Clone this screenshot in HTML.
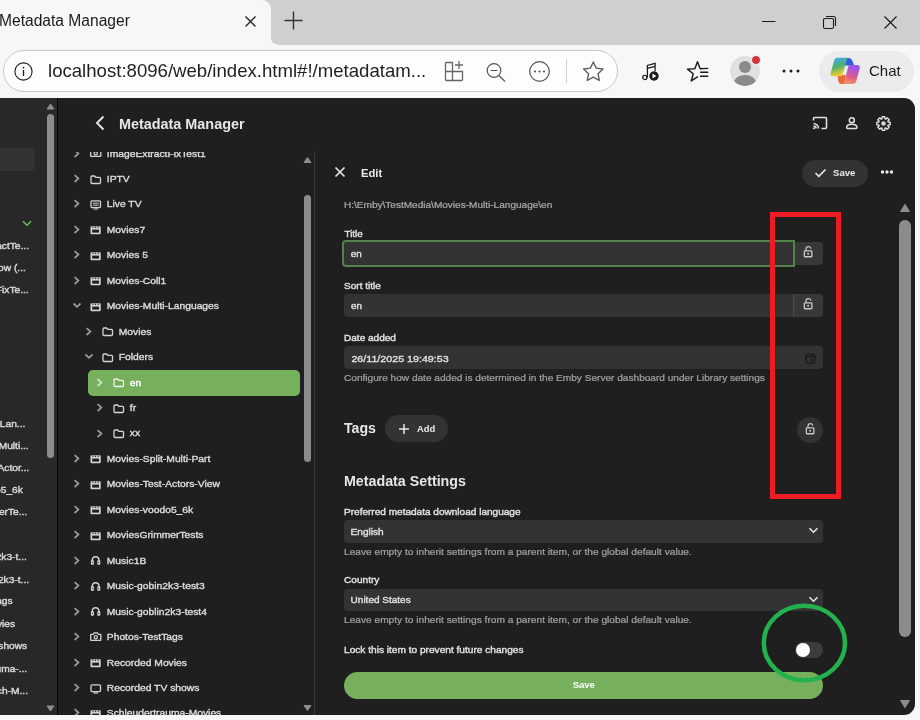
<!DOCTYPE html>
<html><head><meta charset="utf-8"><title>Metadata Manager</title>
<style>
html,body{margin:0;padding:0;}
body{width:920px;height:720px;overflow:hidden;position:relative;background:#f7f7f7;font-family:"Liberation Sans",sans-serif;}
.r{position:absolute;display:block;}
.t{position:absolute;white-space:nowrap;line-height:1;}
svg.r{overflow:visible;}
</style></head><body>
<div id="w" style="position:absolute;left:0;top:0;width:920px;height:720px;will-change:transform;"><div class="r" style="left:0px;top:0px;width:920px;height:98px;background:#f7f7f7;"></div>
<div class="r" style="left:270px;top:0px;width:650px;height:45px;background:#cfcfcf;border-bottom-left-radius:9px;"></div>
<div class="r" style="left:260px;top:0px;width:10px;height:45px;background:#f7f7f7;"></div>
<div class="r" style="left:262px;top:0;width:9px;height:9px;background:#cfcfcf;"></div>
<div class="r" style="left:261px;top:0;width:10px;height:45px;background:#f7f7f7;border-top-right-radius:9px;"></div>
<div class="t" style="left:-1px;top:13.00px;font-size:15.6px;color:#1b1b1b;font-weight:normal;">Metadata Manager</div>
<svg class="r" style="left:244px;top:15px;" width="13" height="13" viewBox="0 0 13 13"><path d="M1.5 1.5L11.5 11.5M11.5 1.5L1.5 11.5" stroke="#1b1b1b" stroke-width="1.3"/></svg>
<svg class="r" style="left:284px;top:11px;" width="19" height="19" viewBox="0 0 19 19"><path d="M9.5 0.5V18.5M0.5 9.5H18.5" stroke="#333" stroke-width="1.4"/></svg>
<svg class="r" style="left:762px;top:20px;" width="14" height="3" viewBox="0 0 14 3"><path d="M0 1.5H13.5" stroke="#1b1b1b" stroke-width="1"/></svg>
<svg class="r" style="left:822px;top:15px;" width="15" height="15" viewBox="0 0 15 15"><rect x="1.5" y="3.5" width="10" height="10" rx="1.5" fill="none" stroke="#1b1b1b" stroke-width="1.1"/><path d="M4 1.5H11.5A2 2 0 0 1 13.5 3.5V11" fill="none" stroke="#1b1b1b" stroke-width="1.1"/></svg>
<svg class="r" style="left:883px;top:15px;" width="15" height="15" viewBox="0 0 15 15"><path d="M1.5 1.5L13.5 13.5M13.5 1.5L1.5 13.5" stroke="#1b1b1b" stroke-width="1.2"/></svg>
<div class="r" style="left:3px;top:50px;width:613px;height:40px;background:#fdfdfd;border:1px solid #c8c8c8;border-radius:21px;"></div>
<svg class="r" style="left:13px;top:61px;" width="21" height="21" viewBox="0 0 21 21"><circle cx="10.5" cy="10.5" r="8.6" fill="none" stroke="#1b1b1b" stroke-width="1.1"/><path d="M10.5 9V15" stroke="#1b1b1b" stroke-width="1.3"/><circle cx="10.5" cy="6.6" r="0.9" fill="#1b1b1b"/></svg>
<div class="t" style="left:48px;top:62.00px;font-size:18.6px;color:#1f1f1f;font-weight:normal;">localhost:8096/web/index.html#!/metadatam...</div>
<svg class="r" style="left:440px;top:58px;" width="26" height="26" viewBox="0 0 26 26"><g fill="none" stroke="#666" stroke-width="1.3"><path d="M6.5 4.5H12.5V22.5H6.5Q5.5 22.5 5.5 21.5V5.5Q5.5 4.5 6.5 4.5Z"/><path d="M5.5 13.5H22.5V21.5Q22.5 22.5 21.5 22.5H12.5"/><path d="M19 3V11M15 7H23"/></g></svg>
<svg class="r" style="left:485px;top:61px;" width="22" height="22" viewBox="0 0 22 22"><g fill="none" stroke="#555" stroke-width="1.2"><circle cx="9" cy="9.5" r="6.8"/><path d="M5.5 9.5H12.5M14 14.5L20 20.5"/></g></svg>
<svg class="r" style="left:528px;top:60px;" width="23" height="23" viewBox="0 0 23 23"><circle cx="11.5" cy="11.5" r="9.8" fill="none" stroke="#555" stroke-width="1.2"/><circle cx="7" cy="11.5" r="1.1" fill="#555"/><circle cx="11.5" cy="11.5" r="1.1" fill="#555"/><circle cx="16" cy="11.5" r="1.1" fill="#555"/></svg>
<div class="r" style="left:566px;top:59px;width:1px;height:24px;background:#d0d0d0;"></div>
<svg class="r" style="left:582px;top:60px;" width="23" height="23" viewBox="0 0 23 23"><polygon points="11.30,2.00 14.24,8.15 21.00,9.05 16.06,13.75 17.30,20.45 11.30,17.20 5.30,20.45 6.54,13.75 1.60,9.05 8.36,8.15" fill="none" stroke="#606060" stroke-width="1.4" stroke-linejoin="round"/></svg>
<svg class="r" style="left:640px;top:60px;" width="22" height="24" viewBox="0 0 22 24"><g fill="none" stroke="#1b1b1b" stroke-width="1.25"><path d="M7.4 17.5V5.4L15.1 3.4V11"/><path d="M7.4 8.4L15.1 6.3"/><circle cx="4.8" cy="17.4" r="2.1"/></g><circle cx="14" cy="16" r="4.7" fill="#1b1b1b"/><path d="M12.5 13.6V18.4L16.4 16Z" fill="#fff"/></svg>
<svg class="r" style="left:684px;top:60px;" width="26" height="24" viewBox="0 0 26 24"><path d="M13.50 16.90 L7.27 20.98 L9.22 13.79 L3.42 9.12 L10.85 8.76 L13.50 1.80 L16.15 8.76 L23.7 8.4" fill="none" stroke="#1b1b1b" stroke-width="1.45" stroke-linejoin="round" stroke-linecap="round"/><path d="M16.6 12.3H23.7M16.6 16.2H23.7" stroke="#1b1b1b" stroke-width="1.45" stroke-linecap="round"/></svg>
<div class="r" style="left:730px;top:56px;width:30px;height:30px;border-radius:50%;background:#e0e0e0;overflow:hidden;"><div class="r" style="left:9px;top:5px;width:12px;height:12px;border-radius:50%;background:#8a8a8a;"></div><div class="r" style="left:4px;top:19px;width:22px;height:16px;border-radius:50%;background:#8a8a8a;"></div></div>
<div class="r" style="left:751px;top:55px;width:10px;height:10px;border-radius:50%;background:#d13438;border:1px solid #f7f7f7;box-sizing:border-box;"></div>
<svg class="r" style="left:781px;top:66px;" width="20" height="10" viewBox="0 0 20 10"><circle cx="3" cy="5" r="1.5" fill="#1b1b1b"/><circle cx="10" cy="5" r="1.5" fill="#1b1b1b"/><circle cx="17" cy="5" r="1.5" fill="#1b1b1b"/></svg>
<div class="r" style="left:819px;top:51px;width:95px;height:41px;background:#ebebeb;border-radius:21px;"></div>
<svg class="r" style="left:826px;top:54px;" width="38" height="34" viewBox="0 0 38 34"><defs><linearGradient id="g1" x1="0" y1="0" x2="0.25" y2="1"><stop offset="0" stop-color="#41a5f5"/><stop offset="0.55" stop-color="#52b36c"/><stop offset="1" stop-color="#f2cb2e"/></linearGradient><linearGradient id="g2" x1="0" y1="0" x2="-0.2" y2="1"><stop offset="0" stop-color="#9a58ea"/><stop offset="0.5" stop-color="#e2598e"/><stop offset="1" stop-color="#f3a35c"/></linearGradient></defs>
<path d="M18 4H22.5Q25.5 4 26.8 8L28.3 11.5H19Z" fill="#2f5fdc"/>
<path d="M11.5 21H19.5L18.8 30H15.5Q13 30 12.2 26.5Z" fill="#e86a3a"/>
<path d="M11.5 3.8H21.5L15.8 22.2H7Q4 22.2 4.7 19L8 7Q8.8 3.8 11.5 3.8Z" fill="url(#g1)"/>
<path d="M22.7 11H31.2Q34.5 11 33.7 14.5L30.5 26.5Q29.6 30 26.5 30H17.8Z" fill="url(#g2)"/></svg>
<div class="t" style="left:869px;top:63.00px;font-size:15px;color:#1b1b1b;font-weight:normal;">Chat</div>
<div class="r" style="left:0px;top:98px;width:915px;height:617px;background:#1f1f1f;border-top-right-radius:11px;border-bottom-right-radius:11px;"></div>
<div class="r" style="left:0px;top:98px;width:57px;height:617px;background:#282828;"></div>
<div class="r" style="left:57px;top:98px;width:1px;height:617px;background:#050505;"></div>
<div class="r" style="left:-10px;top:148px;width:45px;height:23px;background:#333333;border-radius:5px;"></div>
<svg class="r" style="left:22px;top:220px;" width="10" height="7" viewBox="0 0 10 7"><path d="M1 1.2L5 5.2L9 1.2" fill="none" stroke="#6cc05e" stroke-width="1.5"/></svg>
<div class="t" style="right:891px;top:241.00px;font-size:10.2px;color:#d8d8d8;-webkit-text-stroke:0.45px #d8d8d8;transform:scaleY(0.9);transform-origin:0 8px;">ExtractTe...</div>
<div class="t" style="right:894.2px;top:263.00px;font-size:10.2px;color:#d8d8d8;-webkit-text-stroke:0.45px #d8d8d8;transform:scaleY(0.9);transform-origin:0 8px;">Show (...</div>
<div class="t" style="right:891.3px;top:285.00px;font-size:10.2px;color:#d8d8d8;-webkit-text-stroke:0.45px #d8d8d8;transform:scaleY(0.9);transform-origin:0 8px;">ExtractFixTe...</div>
<div class="t" style="right:894.7px;top:419.00px;font-size:10.2px;color:#d8d8d8;-webkit-text-stroke:0.45px #d8d8d8;transform:scaleY(0.9);transform-origin:0 8px;">Multi-Lan...</div>
<div class="t" style="right:891.3px;top:441.00px;font-size:10.2px;color:#d8d8d8;-webkit-text-stroke:0.45px #d8d8d8;transform:scaleY(0.9);transform-origin:0 8px;">Split-Multi...</div>
<div class="t" style="right:890.8px;top:463.00px;font-size:10.2px;color:#d8d8d8;-webkit-text-stroke:0.45px #d8d8d8;transform:scaleY(0.9);transform-origin:0 8px;">Test-Actor...</div>
<div class="t" style="right:897.2px;top:485.00px;font-size:10.2px;color:#d8d8d8;-webkit-text-stroke:0.45px #d8d8d8;transform:scaleY(0.9);transform-origin:0 8px;">voodo5_6k</div>
<div class="t" style="right:892.8px;top:507.00px;font-size:10.2px;color:#d8d8d8;-webkit-text-stroke:0.45px #d8d8d8;transform:scaleY(0.9);transform-origin:0 8px;">GrimmerTe...</div>
<div class="t" style="right:893.2px;top:552.00px;font-size:10.2px;color:#d8d8d8;-webkit-text-stroke:0.45px #d8d8d8;transform:scaleY(0.9);transform-origin:0 8px;">gobin2k3-t...</div>
<div class="t" style="right:890.9px;top:575.00px;font-size:10.2px;color:#d8d8d8;-webkit-text-stroke:0.45px #d8d8d8;transform:scaleY(0.9);transform-origin:0 8px;">goblin2k3-t...</div>
<div class="t" style="right:907.4px;top:596.00px;font-size:10.2px;color:#d8d8d8;-webkit-text-stroke:0.45px #d8d8d8;transform:scaleY(0.9);transform-origin:0 8px;">TestTags</div>
<div class="t" style="right:904.9px;top:619.00px;font-size:10.2px;color:#d8d8d8;-webkit-text-stroke:0.45px #d8d8d8;transform:scaleY(0.9);transform-origin:0 8px;">Movies</div>
<div class="t" style="right:892.8px;top:641.00px;font-size:10.2px;color:#d8d8d8;-webkit-text-stroke:0.45px #d8d8d8;transform:scaleY(0.9);transform-origin:0 8px;">TV shows</div>
<div class="t" style="right:892.8px;top:664.00px;font-size:10.2px;color:#d8d8d8;-webkit-text-stroke:0.45px #d8d8d8;transform:scaleY(0.9);transform-origin:0 8px;">trauma-...</div>
<div class="t" style="right:892px;top:686.00px;font-size:10.2px;color:#d8d8d8;-webkit-text-stroke:0.45px #d8d8d8;transform:scaleY(0.9);transform-origin:0 8px;">Search-M...</div>
<div class="r" style="left:54px;top:98px;width:3px;height:617px;background:#2a2a2a;"></div>
<svg class="r" style="left:46px;top:103px;" width="9" height="7" viewBox="0 0 9 7"><path d="M4.5 1L8 6H1Z" fill="#8c8c8c" stroke="#8c8c8c" stroke-width="1" stroke-linejoin="round"/></svg>
<div class="r" style="left:47px;top:114px;width:7px;height:344px;background:#8c8c8c;border-radius:3.5px;"></div>
<svg class="r" style="left:46px;top:705px;" width="9" height="7" viewBox="0 0 9 7"><path d="M4.5 6L8 1H1Z" fill="#8c8c8c" stroke="#8c8c8c" stroke-width="1" stroke-linejoin="round"/></svg>
<svg class="r" style="left:94px;top:115px;" width="12" height="16" viewBox="0 0 12 16"><path d="M9.5 1.5L3 8L9.5 14.5" fill="none" stroke="#e0e0e0" stroke-width="2"/></svg>
<div class="t" style="left:119px;top:117.00px;font-size:14.4px;color:#e6e6e6;font-weight:bold;">Metadata Manager</div>
<svg class="r" style="left:812px;top:116px;" width="16" height="14" viewBox="0 0 16 14"><g fill="none" stroke="#e0e0e0" stroke-width="1.6"><path d="M1.5 4.5V2.5Q1.5 1.5 2.5 1.5H13.5Q14.5 1.5 14.5 2.5V11.5Q14.5 12.5 13.5 12.5H9.5"/><path d="M1.5 7.5A5 5 0 0 1 6.5 12.5M1.5 10A2.5 2.5 0 0 1 4 12.5"/></g><circle cx="1.8" cy="12.2" r="1" fill="#e0e0e0"/></svg>
<svg class="r" style="left:845px;top:116px;" width="14" height="14" viewBox="0 0 14 14"><g fill="none" stroke="#e0e0e0" stroke-width="1.5"><circle cx="6.8" cy="4.2" r="2.5"/><path d="M1.6 11.6Q1.6 8.2 6.8 8.2Q12 8.2 12 11.6Q12 12.6 11 12.6H2.6Q1.6 12.6 1.6 11.6Z"/></g></svg>
<svg class="r" style="left:876px;top:115.5px;" width="15" height="15" viewBox="0 0 15 15"><polygon points="12.03,5.62 12.16,5.99 14.18,6.20 14.18,8.80 12.16,9.01 12.03,9.38 11.87,9.72 13.14,11.30 11.30,13.14 9.72,11.87 9.38,12.03 9.01,12.16 8.80,14.18 6.20,14.18 5.99,12.16 5.62,12.03 5.28,11.87 3.70,13.14 1.86,11.30 3.13,9.72 2.97,9.38 2.84,9.01 0.82,8.80 0.82,6.20 2.84,5.99 2.97,5.62 3.13,5.28 1.86,3.70 3.70,1.86 5.28,3.13 5.62,2.97 5.99,2.84 6.20,0.82 8.80,0.82 9.01,2.84 9.38,2.97 9.72,3.13 11.30,1.86 13.14,3.70 11.87,5.28" fill="none" stroke="#e0e0e0" stroke-width="1.4" stroke-linejoin="round"/><circle cx="7.5" cy="7.5" r="2.3" fill="#d8d8d8"/></svg>
<div class="r" style="left:58px;top:152px;width:256px;height:563px;overflow:hidden;">
<svg class="r" style="left:15px;top:-3.4499999999999886px;" width="7" height="9" viewBox="0 0 7 9"><path d="M1.6 1.2L5.4 4.6L1.6 8" fill="none" stroke="#9a9a9a" stroke-width="1.75"/></svg>
<svg class="r" style="left:31.5px;top:-2.9499999999999886px;" width="12" height="10" viewBox="0 0 12 10"><g transform="translate(0,-0.9)"><path d="M1.3 2.2H3.2L4.2 0.8H7.3L8.3 2.2H10.2Q10.8 2.2 10.8 2.8V7.7Q10.8 8.3 10.2 8.3H1.3Q0.7 8.3 0.7 7.7V2.8Q0.7 2.2 1.3 2.2Z" fill="none" stroke="#d5d5d5" stroke-width="1.3" stroke-linejoin="round"/><circle cx="5.75" cy="5.1" r="1.6" fill="none" stroke="#d5d5d5" stroke-width="1.2"/></g></svg>
<div class="t" style="left:48.8px;top:-3.00px;font-size:10.3px;color:#dcdcdc;font-weight:normal;-webkit-text-stroke:0.4px #dcdcdc;transform:scaleY(0.9);transform-origin:0 8px;">ImageExtractFixTest1</div>
<svg class="r" style="left:15px;top:22.0px;" width="7" height="9" viewBox="0 0 7 9"><path d="M1.6 1.2L5.4 4.6L1.6 8" fill="none" stroke="#9a9a9a" stroke-width="1.75"/></svg>
<svg class="r" style="left:31.5px;top:22.5px;" width="12" height="10" viewBox="0 0 12 10"><path d="M1 2Q1 1 2 1H4.5L5.8 2.3H9.5Q10.5 2.3 10.5 3.3V7.5Q10.5 8.5 9.5 8.5H2Q1 8.5 1 7.5Z" fill="none" stroke="#d5d5d5" stroke-width="1.3"/></svg>
<div class="t" style="left:48.8px;top:22.00px;font-size:10.3px;color:#dcdcdc;font-weight:normal;-webkit-text-stroke:0.4px #dcdcdc;transform:scaleY(0.9);transform-origin:0 8px;">IPTV</div>
<svg class="r" style="left:15px;top:47.44999999999999px;" width="7" height="9" viewBox="0 0 7 9"><path d="M1.6 1.2L5.4 4.6L1.6 8" fill="none" stroke="#9a9a9a" stroke-width="1.75"/></svg>
<svg class="r" style="left:31.5px;top:47.94999999999999px;" width="12" height="10" viewBox="0 0 12 10"><rect x="1" y="0.8" width="9.5" height="6.8" rx="1" fill="none" stroke="#d5d5d5" stroke-width="1.3"/><path d="M2.8 3.2H8.7M2.8 5.2H8.7M3.5 9H8" stroke="#d5d5d5" stroke-width="1"/></svg>
<div class="t" style="left:48.8px;top:47.00px;font-size:10.3px;color:#dcdcdc;font-weight:normal;-webkit-text-stroke:0.4px #dcdcdc;transform:scaleY(0.9);transform-origin:0 8px;">Live TV</div>
<svg class="r" style="left:15px;top:72.9px;" width="7" height="9" viewBox="0 0 7 9"><path d="M1.6 1.2L5.4 4.6L1.6 8" fill="none" stroke="#9a9a9a" stroke-width="1.75"/></svg>
<svg class="r" style="left:31.5px;top:73.4px;" width="12" height="10" viewBox="0 0 12 10"><rect x="0.5" y="1.2" width="10.2" height="8" rx="0.9" fill="#d5d5d5"/><rect x="2.2" y="4.6" width="6.8" height="3" fill="#1f1f1f"/><rect x="2.5" y="1.6" width="1" height="1.5" fill="#1f1f1f"/><rect x="5.1" y="1.6" width="1" height="1.5" fill="#1f1f1f"/><rect x="7.7" y="1.6" width="1" height="1.5" fill="#1f1f1f"/></svg>
<div class="t" style="left:48.8px;top:73.00px;font-size:10.3px;color:#dcdcdc;font-weight:normal;-webkit-text-stroke:0.4px #dcdcdc;transform:scaleY(0.9);transform-origin:0 8px;">Movies7</div>
<svg class="r" style="left:15px;top:98.35000000000002px;" width="7" height="9" viewBox="0 0 7 9"><path d="M1.6 1.2L5.4 4.6L1.6 8" fill="none" stroke="#9a9a9a" stroke-width="1.75"/></svg>
<svg class="r" style="left:31.5px;top:98.85000000000002px;" width="12" height="10" viewBox="0 0 12 10"><rect x="0.5" y="1.2" width="10.2" height="8" rx="0.9" fill="#d5d5d5"/><rect x="2.2" y="4.6" width="6.8" height="3" fill="#1f1f1f"/><rect x="2.5" y="1.6" width="1" height="1.5" fill="#1f1f1f"/><rect x="5.1" y="1.6" width="1" height="1.5" fill="#1f1f1f"/><rect x="7.7" y="1.6" width="1" height="1.5" fill="#1f1f1f"/></svg>
<div class="t" style="left:48.8px;top:98.00px;font-size:10.3px;color:#dcdcdc;font-weight:normal;-webkit-text-stroke:0.4px #dcdcdc;transform:scaleY(0.9);transform-origin:0 8px;">Movies 5</div>
<svg class="r" style="left:15px;top:123.80000000000001px;" width="7" height="9" viewBox="0 0 7 9"><path d="M1.6 1.2L5.4 4.6L1.6 8" fill="none" stroke="#9a9a9a" stroke-width="1.75"/></svg>
<svg class="r" style="left:31.5px;top:124.30000000000001px;" width="12" height="10" viewBox="0 0 12 10"><rect x="0.5" y="1.2" width="10.2" height="8" rx="0.9" fill="#d5d5d5"/><rect x="2.2" y="4.6" width="6.8" height="3" fill="#1f1f1f"/><rect x="2.5" y="1.6" width="1" height="1.5" fill="#1f1f1f"/><rect x="5.1" y="1.6" width="1" height="1.5" fill="#1f1f1f"/><rect x="7.7" y="1.6" width="1" height="1.5" fill="#1f1f1f"/></svg>
<div class="t" style="left:48.8px;top:124.00px;font-size:10.3px;color:#dcdcdc;font-weight:normal;-webkit-text-stroke:0.4px #dcdcdc;transform:scaleY(0.9);transform-origin:0 8px;">Movies-Coll1</div>
<svg class="r" style="left:14px;top:150.25px;" width="10" height="7" viewBox="0 0 10 7"><path d="M1.5 1.5L5 4.8L8.5 1.5" fill="none" stroke="#9a9a9a" stroke-width="1.75"/></svg>
<svg class="r" style="left:31.5px;top:149.75px;" width="12" height="10" viewBox="0 0 12 10"><rect x="0.5" y="1.2" width="10.2" height="8" rx="0.9" fill="#d5d5d5"/><rect x="2.2" y="4.6" width="6.8" height="3" fill="#1f1f1f"/><rect x="2.5" y="1.6" width="1" height="1.5" fill="#1f1f1f"/><rect x="5.1" y="1.6" width="1" height="1.5" fill="#1f1f1f"/><rect x="7.7" y="1.6" width="1" height="1.5" fill="#1f1f1f"/></svg>
<div class="t" style="left:48.8px;top:149.00px;font-size:10.3px;color:#dcdcdc;font-weight:normal;-webkit-text-stroke:0.4px #dcdcdc;transform:scaleY(0.9);transform-origin:0 8px;">Movies-Multi-Languages</div>
<svg class="r" style="left:27px;top:174.7px;" width="7" height="9" viewBox="0 0 7 9"><path d="M1.6 1.2L5.4 4.6L1.6 8" fill="none" stroke="#9a9a9a" stroke-width="1.75"/></svg>
<svg class="r" style="left:43.5px;top:175.2px;" width="12" height="10" viewBox="0 0 12 10"><path d="M1 2Q1 1 2 1H4.5L5.8 2.3H9.5Q10.5 2.3 10.5 3.3V7.5Q10.5 8.5 9.5 8.5H2Q1 8.5 1 7.5Z" fill="none" stroke="#d5d5d5" stroke-width="1.3"/></svg>
<div class="t" style="left:60.8px;top:175.00px;font-size:10.3px;color:#dcdcdc;font-weight:normal;-webkit-text-stroke:0.4px #dcdcdc;transform:scaleY(0.9);transform-origin:0 8px;">Movies</div>
<svg class="r" style="left:26px;top:201.14999999999998px;" width="10" height="7" viewBox="0 0 10 7"><path d="M1.5 1.5L5 4.8L8.5 1.5" fill="none" stroke="#9a9a9a" stroke-width="1.75"/></svg>
<svg class="r" style="left:43.5px;top:200.64999999999998px;" width="12" height="10" viewBox="0 0 12 10"><path d="M1 2Q1 1 2 1H4.5L5.8 2.3H9.5Q10.5 2.3 10.5 3.3V7.5Q10.5 8.5 9.5 8.5H2Q1 8.5 1 7.5Z" fill="none" stroke="#d5d5d5" stroke-width="1.3"/></svg>
<div class="t" style="left:60.8px;top:200.00px;font-size:10.3px;color:#dcdcdc;font-weight:normal;-webkit-text-stroke:0.4px #dcdcdc;transform:scaleY(0.9);transform-origin:0 8px;">Folders</div>
<div class="r" style="left:30px;top:218.00px;width:212px;height:26.3px;background:#77b05c;border-radius:5px;"></div>
<svg class="r" style="left:38px;top:225.60000000000002px;" width="7" height="9" viewBox="0 0 7 9"><path d="M1.6 1.2L5.4 4.6L1.6 8" fill="none" stroke="#cfe6c6" stroke-width="1.75"/></svg>
<svg class="r" style="left:54.5px;top:226.10000000000002px;" width="12" height="10" viewBox="0 0 12 10"><path d="M1 2Q1 1 2 1H4.5L5.8 2.3H9.5Q10.5 2.3 10.5 3.3V7.5Q10.5 8.5 9.5 8.5H2Q1 8.5 1 7.5Z" fill="none" stroke="#f0f0f0" stroke-width="1.3"/></svg>
<div class="t" style="left:71.80000000000001px;top:226.00px;font-size:10.3px;color:#ffffff;font-weight:normal;-webkit-text-stroke:0.4px #ffffff;transform:scaleY(0.9);transform-origin:0 8px;">en</div>
<svg class="r" style="left:38px;top:251.04999999999995px;" width="7" height="9" viewBox="0 0 7 9"><path d="M1.6 1.2L5.4 4.6L1.6 8" fill="none" stroke="#9a9a9a" stroke-width="1.75"/></svg>
<svg class="r" style="left:54.5px;top:251.54999999999995px;" width="12" height="10" viewBox="0 0 12 10"><path d="M1 2Q1 1 2 1H4.5L5.8 2.3H9.5Q10.5 2.3 10.5 3.3V7.5Q10.5 8.5 9.5 8.5H2Q1 8.5 1 7.5Z" fill="none" stroke="#d5d5d5" stroke-width="1.3"/></svg>
<div class="t" style="left:71.80000000000001px;top:251.00px;font-size:10.3px;color:#dcdcdc;font-weight:normal;-webkit-text-stroke:0.4px #dcdcdc;transform:scaleY(0.9);transform-origin:0 8px;">fr</div>
<svg class="r" style="left:38px;top:276.5px;" width="7" height="9" viewBox="0 0 7 9"><path d="M1.6 1.2L5.4 4.6L1.6 8" fill="none" stroke="#9a9a9a" stroke-width="1.75"/></svg>
<svg class="r" style="left:54.5px;top:277.0px;" width="12" height="10" viewBox="0 0 12 10"><path d="M1 2Q1 1 2 1H4.5L5.8 2.3H9.5Q10.5 2.3 10.5 3.3V7.5Q10.5 8.5 9.5 8.5H2Q1 8.5 1 7.5Z" fill="none" stroke="#d5d5d5" stroke-width="1.3"/></svg>
<div class="t" style="left:71.80000000000001px;top:276.00px;font-size:10.3px;color:#dcdcdc;font-weight:normal;-webkit-text-stroke:0.4px #dcdcdc;transform:scaleY(0.9);transform-origin:0 8px;">xx</div>
<svg class="r" style="left:15px;top:301.95px;" width="7" height="9" viewBox="0 0 7 9"><path d="M1.6 1.2L5.4 4.6L1.6 8" fill="none" stroke="#9a9a9a" stroke-width="1.75"/></svg>
<svg class="r" style="left:31.5px;top:302.45px;" width="12" height="10" viewBox="0 0 12 10"><rect x="0.5" y="1.2" width="10.2" height="8" rx="0.9" fill="#d5d5d5"/><rect x="2.2" y="4.6" width="6.8" height="3" fill="#1f1f1f"/><rect x="2.5" y="1.6" width="1" height="1.5" fill="#1f1f1f"/><rect x="5.1" y="1.6" width="1" height="1.5" fill="#1f1f1f"/><rect x="7.7" y="1.6" width="1" height="1.5" fill="#1f1f1f"/></svg>
<div class="t" style="left:48.8px;top:302.00px;font-size:10.3px;color:#dcdcdc;font-weight:normal;-webkit-text-stroke:0.4px #dcdcdc;transform:scaleY(0.9);transform-origin:0 8px;">Movies-Split-Multi-Part</div>
<svg class="r" style="left:15px;top:327.4px;" width="7" height="9" viewBox="0 0 7 9"><path d="M1.6 1.2L5.4 4.6L1.6 8" fill="none" stroke="#9a9a9a" stroke-width="1.75"/></svg>
<svg class="r" style="left:31.5px;top:327.9px;" width="12" height="10" viewBox="0 0 12 10"><rect x="0.5" y="1.2" width="10.2" height="8" rx="0.9" fill="#d5d5d5"/><rect x="2.2" y="4.6" width="6.8" height="3" fill="#1f1f1f"/><rect x="2.5" y="1.6" width="1" height="1.5" fill="#1f1f1f"/><rect x="5.1" y="1.6" width="1" height="1.5" fill="#1f1f1f"/><rect x="7.7" y="1.6" width="1" height="1.5" fill="#1f1f1f"/></svg>
<div class="t" style="left:48.8px;top:327.00px;font-size:10.3px;color:#dcdcdc;font-weight:normal;-webkit-text-stroke:0.4px #dcdcdc;transform:scaleY(0.9);transform-origin:0 8px;">Movies-Test-Actors-View</div>
<svg class="r" style="left:15px;top:352.8499999999999px;" width="7" height="9" viewBox="0 0 7 9"><path d="M1.6 1.2L5.4 4.6L1.6 8" fill="none" stroke="#9a9a9a" stroke-width="1.75"/></svg>
<svg class="r" style="left:31.5px;top:353.3499999999999px;" width="12" height="10" viewBox="0 0 12 10"><rect x="0.5" y="1.2" width="10.2" height="8" rx="0.9" fill="#d5d5d5"/><rect x="2.2" y="4.6" width="6.8" height="3" fill="#1f1f1f"/><rect x="2.5" y="1.6" width="1" height="1.5" fill="#1f1f1f"/><rect x="5.1" y="1.6" width="1" height="1.5" fill="#1f1f1f"/><rect x="7.7" y="1.6" width="1" height="1.5" fill="#1f1f1f"/></svg>
<div class="t" style="left:48.8px;top:353.00px;font-size:10.3px;color:#dcdcdc;font-weight:normal;-webkit-text-stroke:0.4px #dcdcdc;transform:scaleY(0.9);transform-origin:0 8px;">Movies-voodo5_6k</div>
<svg class="r" style="left:15px;top:378.29999999999995px;" width="7" height="9" viewBox="0 0 7 9"><path d="M1.6 1.2L5.4 4.6L1.6 8" fill="none" stroke="#9a9a9a" stroke-width="1.75"/></svg>
<svg class="r" style="left:31.5px;top:378.79999999999995px;" width="12" height="10" viewBox="0 0 12 10"><rect x="0.5" y="1.2" width="10.2" height="8" rx="0.9" fill="#d5d5d5"/><rect x="2.2" y="4.6" width="6.8" height="3" fill="#1f1f1f"/><rect x="2.5" y="1.6" width="1" height="1.5" fill="#1f1f1f"/><rect x="5.1" y="1.6" width="1" height="1.5" fill="#1f1f1f"/><rect x="7.7" y="1.6" width="1" height="1.5" fill="#1f1f1f"/></svg>
<div class="t" style="left:48.8px;top:378.00px;font-size:10.3px;color:#dcdcdc;font-weight:normal;-webkit-text-stroke:0.4px #dcdcdc;transform:scaleY(0.9);transform-origin:0 8px;">MoviesGrimmerTests</div>
<svg class="r" style="left:15px;top:403.75px;" width="7" height="9" viewBox="0 0 7 9"><path d="M1.6 1.2L5.4 4.6L1.6 8" fill="none" stroke="#9a9a9a" stroke-width="1.75"/></svg>
<svg class="r" style="left:31.5px;top:404.25px;" width="12" height="10" viewBox="0 0 12 10"><path d="M2.2 6.5V4.6Q2.2 0.7 5.6 0.7Q9 0.7 9 4.6V6.5" fill="none" stroke="#d5d5d5" stroke-width="1.4"/><rect x="0.9" y="4.3" width="3" height="4.4" rx="0.8" fill="#d5d5d5"/><rect x="7.3" y="4.3" width="3" height="4.4" rx="0.8" fill="#d5d5d5"/><circle cx="2.5" cy="6.3" r="0.6" fill="#1f1f1f"/><circle cx="8.7" cy="6.3" r="0.6" fill="#1f1f1f"/></svg>
<div class="t" style="left:48.8px;top:404.00px;font-size:10.3px;color:#dcdcdc;font-weight:normal;-webkit-text-stroke:0.4px #dcdcdc;transform:scaleY(0.9);transform-origin:0 8px;">Music1B</div>
<svg class="r" style="left:15px;top:429.20000000000005px;" width="7" height="9" viewBox="0 0 7 9"><path d="M1.6 1.2L5.4 4.6L1.6 8" fill="none" stroke="#9a9a9a" stroke-width="1.75"/></svg>
<svg class="r" style="left:31.5px;top:429.70000000000005px;" width="12" height="10" viewBox="0 0 12 10"><path d="M2.2 6.5V4.6Q2.2 0.7 5.6 0.7Q9 0.7 9 4.6V6.5" fill="none" stroke="#d5d5d5" stroke-width="1.4"/><rect x="0.9" y="4.3" width="3" height="4.4" rx="0.8" fill="#d5d5d5"/><rect x="7.3" y="4.3" width="3" height="4.4" rx="0.8" fill="#d5d5d5"/><circle cx="2.5" cy="6.3" r="0.6" fill="#1f1f1f"/><circle cx="8.7" cy="6.3" r="0.6" fill="#1f1f1f"/></svg>
<div class="t" style="left:48.8px;top:429.00px;font-size:10.3px;color:#dcdcdc;font-weight:normal;-webkit-text-stroke:0.4px #dcdcdc;transform:scaleY(0.9);transform-origin:0 8px;">Music-gobin2k3-test3</div>
<svg class="r" style="left:15px;top:454.65px;" width="7" height="9" viewBox="0 0 7 9"><path d="M1.6 1.2L5.4 4.6L1.6 8" fill="none" stroke="#9a9a9a" stroke-width="1.75"/></svg>
<svg class="r" style="left:31.5px;top:455.15px;" width="12" height="10" viewBox="0 0 12 10"><path d="M2.2 6.5V4.6Q2.2 0.7 5.6 0.7Q9 0.7 9 4.6V6.5" fill="none" stroke="#d5d5d5" stroke-width="1.4"/><rect x="0.9" y="4.3" width="3" height="4.4" rx="0.8" fill="#d5d5d5"/><rect x="7.3" y="4.3" width="3" height="4.4" rx="0.8" fill="#d5d5d5"/><circle cx="2.5" cy="6.3" r="0.6" fill="#1f1f1f"/><circle cx="8.7" cy="6.3" r="0.6" fill="#1f1f1f"/></svg>
<div class="t" style="left:48.8px;top:455.00px;font-size:10.3px;color:#dcdcdc;font-weight:normal;-webkit-text-stroke:0.4px #dcdcdc;transform:scaleY(0.9);transform-origin:0 8px;">Music-goblin2k3-test4</div>
<svg class="r" style="left:15px;top:480.0999999999999px;" width="7" height="9" viewBox="0 0 7 9"><path d="M1.6 1.2L5.4 4.6L1.6 8" fill="none" stroke="#9a9a9a" stroke-width="1.75"/></svg>
<svg class="r" style="left:31.5px;top:480.5999999999999px;" width="12" height="10" viewBox="0 0 12 10"><g transform="translate(0,-0.9)"><path d="M1.3 2.2H3.2L4.2 0.8H7.3L8.3 2.2H10.2Q10.8 2.2 10.8 2.8V7.7Q10.8 8.3 10.2 8.3H1.3Q0.7 8.3 0.7 7.7V2.8Q0.7 2.2 1.3 2.2Z" fill="none" stroke="#d5d5d5" stroke-width="1.3" stroke-linejoin="round"/><circle cx="5.75" cy="5.1" r="1.6" fill="none" stroke="#d5d5d5" stroke-width="1.2"/></g></svg>
<div class="t" style="left:48.8px;top:480.00px;font-size:10.3px;color:#dcdcdc;font-weight:normal;-webkit-text-stroke:0.4px #dcdcdc;transform:scaleY(0.9);transform-origin:0 8px;">Photos-TestTags</div>
<svg class="r" style="left:15px;top:505.54999999999995px;" width="7" height="9" viewBox="0 0 7 9"><path d="M1.6 1.2L5.4 4.6L1.6 8" fill="none" stroke="#9a9a9a" stroke-width="1.75"/></svg>
<svg class="r" style="left:31.5px;top:506.04999999999995px;" width="12" height="10" viewBox="0 0 12 10"><rect x="0.5" y="1.2" width="10.2" height="8" rx="0.9" fill="#d5d5d5"/><rect x="2.2" y="4.6" width="6.8" height="3" fill="#1f1f1f"/><rect x="2.5" y="1.6" width="1" height="1.5" fill="#1f1f1f"/><rect x="5.1" y="1.6" width="1" height="1.5" fill="#1f1f1f"/><rect x="7.7" y="1.6" width="1" height="1.5" fill="#1f1f1f"/></svg>
<div class="t" style="left:48.8px;top:506.00px;font-size:10.3px;color:#dcdcdc;font-weight:normal;-webkit-text-stroke:0.4px #dcdcdc;transform:scaleY(0.9);transform-origin:0 8px;">Recorded Movies</div>
<svg class="r" style="left:15px;top:531.0px;" width="7" height="9" viewBox="0 0 7 9"><path d="M1.6 1.2L5.4 4.6L1.6 8" fill="none" stroke="#9a9a9a" stroke-width="1.75"/></svg>
<svg class="r" style="left:31.5px;top:531.5px;" width="12" height="10" viewBox="0 0 12 10"><rect x="1" y="0.8" width="9.5" height="6.8" rx="1" fill="none" stroke="#d5d5d5" stroke-width="1.3"/><path d="M3.5 9H8" stroke="#d5d5d5" stroke-width="1.2"/></svg>
<div class="t" style="left:48.8px;top:531.00px;font-size:10.3px;color:#dcdcdc;font-weight:normal;-webkit-text-stroke:0.4px #dcdcdc;transform:scaleY(0.9);transform-origin:0 8px;">Recorded TV shows</div>
<svg class="r" style="left:15px;top:556.4499999999999px;" width="7" height="9" viewBox="0 0 7 9"><path d="M1.6 1.2L5.4 4.6L1.6 8" fill="none" stroke="#9a9a9a" stroke-width="1.75"/></svg>
<svg class="r" style="left:31.5px;top:556.9499999999999px;" width="12" height="10" viewBox="0 0 12 10"><rect x="0.5" y="1.2" width="10.2" height="8" rx="0.9" fill="#d5d5d5"/><rect x="2.2" y="4.6" width="6.8" height="3" fill="#1f1f1f"/><rect x="2.5" y="1.6" width="1" height="1.5" fill="#1f1f1f"/><rect x="5.1" y="1.6" width="1" height="1.5" fill="#1f1f1f"/><rect x="7.7" y="1.6" width="1" height="1.5" fill="#1f1f1f"/></svg>
<div class="t" style="left:48.8px;top:556.00px;font-size:10.3px;color:#dcdcdc;font-weight:normal;-webkit-text-stroke:0.4px #dcdcdc;transform:scaleY(0.9);transform-origin:0 8px;">Schleudertrauma-Movies</div>
</div>
<svg class="r" style="left:303px;top:156px;" width="9" height="8" viewBox="0 0 9 8"><path d="M4.5 1.5L8 6.5H1Z" fill="#8c8c8c" stroke="#8c8c8c" stroke-width="1" stroke-linejoin="round"/></svg>
<div class="r" style="left:304px;top:195px;width:7px;height:267px;background:#8c8c8c;border-radius:3.5px;"></div>
<svg class="r" style="left:303px;top:704px;" width="9" height="8" viewBox="0 0 9 8"><path d="M4.5 6.5L8 1.5H1Z" fill="#8c8c8c" stroke="#8c8c8c" stroke-width="1" stroke-linejoin="round"/></svg>
<div class="r" style="left:314px;top:151px;width:1px;height:564px;background:#3a3a3a;"></div>
<svg class="r" style="left:334px;top:166px;" width="12" height="12" viewBox="0 0 12 12"><path d="M1.5 1.5L10.5 10.5M10.5 1.5L1.5 10.5" stroke="#e8e8e8" stroke-width="1.6"/></svg>
<div class="t" style="left:361px;top:168.00px;font-size:11.2px;color:#eaeaea;font-weight:bold;">Edit</div>
<div class="r" style="left:802px;top:160px;width:66px;height:27px;background:#333333;border-radius:13.5px;"></div>
<svg class="r" style="left:814px;top:168px;" width="13" height="10" viewBox="0 0 13 10"><path d="M1.5 5L4.8 8.3L11.5 1.5" fill="none" stroke="#e8e8e8" stroke-width="1.6"/></svg>
<div class="t" style="left:833px;top:168.00px;font-size:9.6px;color:#eaeaea;font-weight:bold;">Save</div>
<svg class="r" style="left:880px;top:169px;" width="14" height="6" viewBox="0 0 14 6"><circle cx="2.5" cy="3" r="1.7" fill="#e8e8e8"/><circle cx="7" cy="3" r="1.7" fill="#e8e8e8"/><circle cx="11.5" cy="3" r="1.7" fill="#e8e8e8"/></svg>
<div class="t" style="left:344px;top:200.00px;font-size:10.05px;color:#a8a8a8;font-weight:normal;-webkit-text-stroke:0.25px #a8a8a8;transform:scaleY(0.9);transform-origin:0 8px;">H:\Emby\TestMedia\Movies-Multi-Language\en</div>
<div class="t" style="left:344.5px;top:229.00px;font-size:9.85px;color:#e2e2e2;font-weight:normal;-webkit-text-stroke:0.4px #e2e2e2;transform:scaleY(0.9);transform-origin:0 8px;">Title</div>
<div class="r" style="left:342px;top:240px;width:453px;height:27px;background:#333333;border:2px solid #52834a;border-radius:4px 0 0 4px;box-sizing:border-box;"></div>
<div class="r" style="left:795px;top:242px;width:28px;height:23px;background:#383838;border-radius:0 4px 4px 0;"></div>
<svg class="r" style="left:802.8px;top:244.7px;" width="10" height="12" viewBox="0 0 10 12"><path d="M3 6V3.9Q3 1.6 5.4 1.6Q7.6 1.6 8 3.6" fill="none" stroke="#c8c8c8" stroke-width="1.25"/><rect x="1.35" y="5.95" width="7.5" height="5.8" rx="0.5" fill="none" stroke="#c8c8c8" stroke-width="1.3"/><circle cx="5.1" cy="8.85" r="1" fill="#c8c8c8"/></svg>
<div class="t" style="left:350.7px;top:249.00px;font-size:9.9px;color:#e0e0e0;font-weight:normal;-webkit-text-stroke:0.4px #e0e0e0;transform:scaleY(0.9);transform-origin:0 8px;">en</div>
<div class="t" style="left:344px;top:281.00px;font-size:10.09px;color:#e2e2e2;font-weight:normal;-webkit-text-stroke:0.4px #e2e2e2;transform:scaleY(0.9);transform-origin:0 8px;">Sort title</div>
<div class="r" style="left:344px;top:294px;width:449px;height:23px;background:#333333;border-radius:4px 0 0 4px;"></div>
<div class="r" style="left:793px;top:294px;width:1px;height:23px;background:#4a4a4a;"></div>
<div class="r" style="left:794px;top:294px;width:29px;height:23px;background:#383838;border-radius:0 4px 4px 0;"></div>
<svg class="r" style="left:802.8px;top:296.7px;" width="10" height="12" viewBox="0 0 10 12"><path d="M3 6V3.9Q3 1.6 5.4 1.6Q7.6 1.6 8 3.6" fill="none" stroke="#c8c8c8" stroke-width="1.25"/><rect x="1.35" y="5.95" width="7.5" height="5.8" rx="0.5" fill="none" stroke="#c8c8c8" stroke-width="1.3"/><circle cx="5.1" cy="8.85" r="1" fill="#c8c8c8"/></svg>
<div class="t" style="left:351px;top:301.00px;font-size:9.9px;color:#e0e0e0;font-weight:normal;-webkit-text-stroke:0.4px #e0e0e0;transform:scaleY(0.9);transform-origin:0 8px;">en</div>
<div class="t" style="left:344px;top:333.00px;font-size:10.06px;color:#e2e2e2;font-weight:normal;-webkit-text-stroke:0.4px #e2e2e2;transform:scaleY(0.9);transform-origin:0 8px;">Date added</div>
<div class="r" style="left:344px;top:346px;width:479px;height:23px;background:#333333;border-radius:4px;"></div>
<div class="t" style="left:351.4px;top:353.00px;font-size:10.7px;color:#e0e0e0;font-weight:normal;-webkit-text-stroke:0.4px #e0e0e0;transform:scaleY(0.9);transform-origin:0 9px;">26/11/2025 19:49:53</div>
<svg class="r" style="left:805px;top:353px;" width="11" height="11" viewBox="0 0 11 11"><rect x="0.9" y="1.5" width="9" height="8.6" rx="2" fill="none" stroke="#1b1b1b" stroke-width="1.4"/><path d="M1 3.8H10" stroke="#1b1b1b" stroke-width="1.2"/><rect x="5.5" y="5.8" width="2.5" height="2.5" fill="#1b1b1b"/></svg>
<div class="t" style="left:344px;top:373.00px;font-size:10.11px;color:#a0a0a0;font-weight:normal;-webkit-text-stroke:0.25px #a0a0a0;transform:scaleY(0.9);transform-origin:0 8px;">Configure how date added is determined in the Emby Server dashboard under Library settings</div>
<div class="t" style="left:344px;top:421.00px;font-size:14.1px;color:#e6e6e6;font-weight:bold;">Tags</div>
<div class="r" style="left:385px;top:415px;width:63px;height:27px;background:#333333;border-radius:13.5px;"></div>
<svg class="r" style="left:398px;top:423px;" width="12" height="12" viewBox="0 0 12 12"><path d="M6 1V11M1 6H11" stroke="#e8e8e8" stroke-width="1.5"/></svg>
<div class="t" style="left:417px;top:424.00px;font-size:9.4px;color:#eaeaea;font-weight:bold;">Add</div>
<div class="r" style="left:797px;top:417px;width:26px;height:26px;border-radius:50%;background:#333333;"></div>
<svg class="r" style="left:805px;top:421.8px;" width="10" height="12" viewBox="0 0 10 12"><path d="M3 6V3.9Q3 1.6 5.4 1.6Q7.6 1.6 8 3.6" fill="none" stroke="#c8c8c8" stroke-width="1.25"/><rect x="1.35" y="5.95" width="7.5" height="5.8" rx="0.5" fill="none" stroke="#c8c8c8" stroke-width="1.3"/><circle cx="5.1" cy="8.85" r="1" fill="#c8c8c8"/></svg>
<div class="t" style="left:344px;top:474.00px;font-size:14.26px;color:#e6e6e6;font-weight:bold;">Metadata Settings</div>
<div class="t" style="left:344px;top:507.00px;font-size:10.06px;color:#e2e2e2;font-weight:normal;-webkit-text-stroke:0.4px #e2e2e2;transform:scaleY(0.9);transform-origin:0 8px;">Preferred metadata download language</div>
<div class="r" style="left:344px;top:520px;width:479px;height:23px;background:#333333;border-radius:4px;"></div>
<div class="t" style="left:350.6px;top:527.00px;font-size:10.06px;color:#e0e0e0;font-weight:normal;-webkit-text-stroke:0.4px #e0e0e0;transform:scaleY(0.9);transform-origin:0 8px;">English</div>
<svg class="r" style="left:808px;top:527px;" width="11" height="7" viewBox="0 0 11 7"><path d="M1.5 1.3L5.5 5.2L9.5 1.3" fill="none" stroke="#e8e8e8" stroke-width="1.6"/></svg>
<div class="t" style="left:344px;top:547.00px;font-size:10.16px;color:#a0a0a0;font-weight:normal;-webkit-text-stroke:0.25px #a0a0a0;transform:scaleY(0.9);transform-origin:0 8px;">Leave empty to inherit settings from a parent item, or the global default value.</div>
<div class="t" style="left:344px;top:575.00px;font-size:10.1px;color:#e2e2e2;font-weight:normal;-webkit-text-stroke:0.4px #e2e2e2;transform:scaleY(0.9);transform-origin:0 8px;">Country</div>
<div class="r" style="left:344px;top:589px;width:479px;height:22px;background:#333333;border-radius:4px;"></div>
<div class="t" style="left:350.6px;top:595.00px;font-size:10.0px;color:#e0e0e0;font-weight:normal;-webkit-text-stroke:0.4px #e0e0e0;transform:scaleY(0.9);transform-origin:0 8px;">United States</div>
<svg class="r" style="left:808px;top:596px;" width="11" height="7" viewBox="0 0 11 7"><path d="M1.5 1.3L5.5 5.2L9.5 1.3" fill="none" stroke="#e8e8e8" stroke-width="1.6"/></svg>
<div class="t" style="left:344px;top:615.00px;font-size:10.16px;color:#a0a0a0;font-weight:normal;-webkit-text-stroke:0.25px #a0a0a0;transform:scaleY(0.9);transform-origin:0 8px;">Leave empty to inherit settings from a parent item, or the global default value.</div>
<div class="t" style="left:344px;top:645.00px;font-size:10.15px;color:#e2e2e2;font-weight:normal;-webkit-text-stroke:0.4px #e2e2e2;transform:scaleY(0.9);transform-origin:0 8px;">Lock this item to prevent future changes</div>
<div class="r" style="left:795px;top:642px;width:28px;height:16px;background:#3c3c3c;border-radius:8px;"></div>
<div class="r" style="left:796px;top:643px;width:14px;height:14px;border-radius:50%;background:#ffffff;"></div>
<div class="r" style="left:344px;top:672px;width:479px;height:27px;background:#77b05c;border-radius:13.5px;"></div>
<div class="t" style="left:572.7px;top:680.00px;font-size:9.5px;color:#ffffff;font-weight:bold;">Save</div>
<svg class="r" style="left:899px;top:203px;" width="12" height="10" viewBox="0 0 12 10"><path d="M6 1.5L10.3 8.5H1.7Z" fill="#8c8c8c" stroke="#8c8c8c" stroke-width="1.2" stroke-linejoin="round"/></svg>
<div class="r" style="left:899px;top:220px;width:12px;height:417px;background:#8c8c8c;border-radius:6px;"></div>
<svg class="r" style="left:899px;top:699px;" width="12" height="10" viewBox="0 0 12 10"><path d="M6 8.5L10.3 1.5H1.7Z" fill="#8c8c8c" stroke="#8c8c8c" stroke-width="1.2" stroke-linejoin="round"/></svg>
<div class="r" style="left:770px;top:212px;width:71px;height:287px;background:transparent;border:5px solid #ed1c24;box-sizing:border-box;"></div>
<svg class="r" style="left:760px;top:602px;" width="90" height="84" viewBox="0 0 90 84"><ellipse cx="44.4" cy="41" rx="40.6" ry="37.2" fill="none" stroke="#22b14c" stroke-width="4.5"/></svg>
</div></body></html>
